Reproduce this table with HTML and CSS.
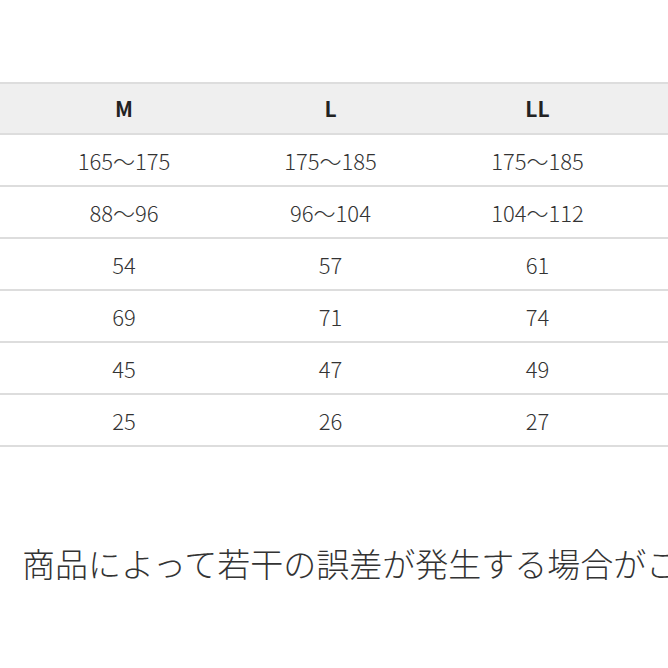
FILE: index.html
```html
<!DOCTYPE html>
<html lang="ja">
<head>
<meta charset="utf-8">
<link rel="stylesheet" href="styles.css">
</head>
<body>
<div class="page">
  <div class="size-table">
    <div class="row head">
      <div class="cell edge"></div>
      <div class="cell">M</div>
      <div class="cell">L</div>
      <div class="cell">LL</div>
      <div class="cell edge"></div>
    </div>
    <div class="row">
      <div class="cell edge"></div>
      <div class="cell">165〜175</div>
      <div class="cell">175〜185</div>
      <div class="cell">175〜185</div>
      <div class="cell edge"></div>
    </div>
    <div class="row">
      <div class="cell edge"></div>
      <div class="cell">88〜96</div>
      <div class="cell">96〜104</div>
      <div class="cell">104〜112</div>
      <div class="cell edge"></div>
    </div>
    <div class="row">
      <div class="cell edge"></div>
      <div class="cell">54</div>
      <div class="cell">57</div>
      <div class="cell">61</div>
      <div class="cell edge"></div>
    </div>
    <div class="row">
      <div class="cell edge"></div>
      <div class="cell">69</div>
      <div class="cell">71</div>
      <div class="cell">74</div>
      <div class="cell edge"></div>
    </div>
    <div class="row">
      <div class="cell edge"></div>
      <div class="cell">45</div>
      <div class="cell">47</div>
      <div class="cell">49</div>
      <div class="cell edge"></div>
    </div>
    <div class="row">
      <div class="cell edge"></div>
      <div class="cell">25</div>
      <div class="cell">26</div>
      <div class="cell">27</div>
      <div class="cell edge"></div>
    </div>
  </div>
  <p class="note">商品によって若干の誤差が発生する場合がございます。</p>
</div>
</body>
</html>
```

FILE: styles.css
```css
html, body {
  margin: 0;
  padding: 0;
  background: #ffffff;
}
body {
  width: 668px;
  height: 668px;
  overflow: hidden;
  font-family: "Noto Sans CJK JP", "Noto Sans", sans-serif;
  color: #333333;
}
.page {
  padding-top: 82px;
}
.size-table {
  border-top: 2px solid #dddddd;
}
.row {
  display: grid;
  grid-template-columns: 21px 206px 207px 207px 1fr;
  height: 50px;
  border-bottom: 2px solid #dddddd;
  align-items: center;
}
.row.head {
  background: #efefef;
  height: 49px;
}
.cell {
  text-align: center;
  font-size: 22px;
  font-weight: 300;
  line-height: 1;
  white-space: nowrap;
}
.head .cell {
  font-weight: 700;
  color: #222222;
  font-size: 21px;
}
.note {
  margin: 100px 0 0 22px;
  font-size: 33px;
  font-weight: 300;
  color: #333333;
  white-space: nowrap;
  overflow: hidden;
  line-height: 1;
}
```
